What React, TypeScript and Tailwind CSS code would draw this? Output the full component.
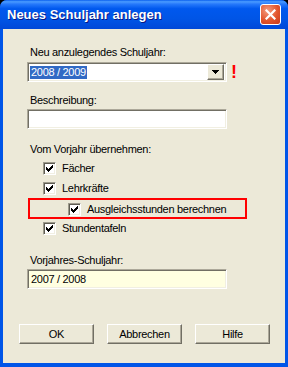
import { FC, ReactNode } from 'react';

const font = { fontFamily: '"Liberation Sans", Arial, sans-serif' };

// kleines Häkchen im klassischen Windows-Stil (7x7 Pixel)
const Check: FC = () => (
  <svg width="7" height="7" viewBox="0 0 7 7" shapeRendering="crispEdges">
    <rect x="0" y="2" width="1" height="3" fill="#000" />
    <rect x="1" y="3" width="1" height="3" fill="#000" />
    <rect x="2" y="4" width="1" height="3" fill="#000" />
    <rect x="3" y="3" width="1" height="3" fill="#000" />
    <rect x="4" y="2" width="1" height="3" fill="#000" />
    <rect x="5" y="1" width="1" height="3" fill="#000" />
    <rect x="6" y="0" width="1" height="3" fill="#000" />
  </svg>
);

const CheckRow: FC<{ label: string; className?: string }> = ({ label, className = '' }) => (
  <div className={`flex items-center h-[13px] ${className}`}>
    <div className="w-[13px] h-[13px] border border-t-[#9D9A8C] border-l-[#9D9A8C] border-r-white border-b-white shadow-[inset_1px_1px_#5E5C52,inset_-1px_-1px_#F1EFE2] bg-white flex items-center justify-center">
      <Check />
    </div>
    <span className="ml-[6px] text-[11px] leading-[13px] tracking-[-0.3px] text-black">{label}</span>
  </div>
);

const Sunken: FC<{ children?: ReactNode; className?: string }> = ({ children, className = '' }) => (
  <div
    className={`w-[200px] h-[20px] border border-t-[#ACA899] border-l-[#ACA899] border-r-white border-b-white shadow-[inset_1px_1px_#716F64,inset_-1px_-1px_#F1EFE2] flex items-center ${className}`}
  >
    {children}
  </div>
);

const Button: FC<{ label: string }> = ({ label }) => (
  <div className="w-[75px] h-[20px] bg-[#ECE9D8] border border-t-white border-l-white border-r-[#716F64] border-b-[#716F64] shadow-[inset_-1px_-1px_#ACA899] flex items-center justify-center text-[11px] leading-[13px] tracking-[-0.3px] text-black">
    {label}
  </div>
);

const Label: FC<{ text: string; className?: string }> = ({ text, className = '' }) => (
  <div className={`pl-[3px] text-[11px] leading-[13px] tracking-[-0.3px] text-black ${className}`}>{text}</div>
);

export default function App() {
  return (
    <div className="w-[288px] h-[367px] bg-black" style={font}>
      <div className="w-[288px] h-[367px] rounded-t-[7px] bg-[#0055E8] flex flex-col overflow-hidden">
        {/* Titelleiste */}
        <div className="h-[29px] shrink-0 flex items-center px-[7px] bg-[linear-gradient(to_bottom,#0A5FEE_0%,#4A9BFF_6%,#2679FB_14%,#0058EE_30%,#0055E6_65%,#0048D8_100%)]">
          <span className="text-white font-bold text-[13px] leading-[16px] [text-shadow:1px_1px_#0A1883]">
            Neues Schuljahr anlegen
          </span>
          <div className="ml-auto w-[21px] h-[21px] rounded-[3px] border border-white bg-[radial-gradient(circle_at_35%_30%,#F49C7F_0%,#E2552C_55%,#C9381A_100%)] flex items-center justify-center">
            <svg width="11" height="11" viewBox="0 0 11 11">
              <path d="M1.5 1.5 L9.5 9.5 M9.5 1.5 L1.5 9.5" stroke="#fff" strokeWidth="2.2" strokeLinecap="square" />
            </svg>
          </div>
        </div>

        {/* Inhalt */}
        <div className="flex-1 mx-[3px] mb-[4px] bg-[#ECE9D8] pl-[24px] pt-[17px] flex flex-col">
          <Label text="Neu anzulegendes Schuljahr:" />
          <div className="flex items-center mt-[3px]">
            <Sunken className="bg-white pl-[2px] pr-[2px]">
              <span className="bg-[#316AC5] text-white text-[11px] leading-[13px] tracking-[-0.3px] px-[1px]">2008 / 2009</span>
              <div className="ml-auto w-[17px] h-[16px] bg-[#ECE9D8] border border-t-white border-l-white border-r-[#716F64] border-b-[#716F64] shadow-[inset_-1px_-1px_#ACA899] flex items-center justify-center">
                <svg width="7" height="4" viewBox="0 0 7 4" shapeRendering="crispEdges">
                  <path d="M0 0 H7 V1 H6 V2 H5 V3 H4 V4 H3 V3 H2 V2 H1 V1 H0 Z" fill="#000" />
                </svg>
              </div>
            </Sunken>
            <span className="ml-[4px] text-[#FF0000] font-bold text-[18px] leading-[18px]">!</span>
          </div>

          <Label text="Beschreibung:" className="mt-[12px]" />
          <Sunken className="bg-white mt-[2px]" />

          <Label text="Vom Vorjahr übernehmen:" className="mt-[14px]" />
          <CheckRow label="Fächer" className="ml-[16px] mt-[6px]" />
          <CheckRow label="Lehrkräfte" className="ml-[16px] mt-[7px]" />
          <div className="ml-[1px] mt-[3px] w-[219px] h-[21px] border-2 border-[#FF0000] pl-[38px] pt-[3px]">
            <CheckRow label="Ausgleichsstunden berechnen" />
          </div>
          <CheckRow label="Stundentafeln" className="ml-[16px] mt-[3px]" />

          <Label text="Vorjahres-Schuljahr:" className="mt-[19px]" />
          <Sunken className="bg-[#FFFFE1] mt-[2px] pl-[3px]">
            <span className="text-[11px] leading-[13px] tracking-[-0.3px] text-black">2007 / 2008</span>
          </Sunken>

          <div className="flex gap-[13px] mt-[35px] ml-[-8px]">
            <Button label="OK" />
            <Button label="Abbrechen" />
            <Button label="Hilfe" />
          </div>
        </div>
      </div>
    </div>
  );
}
